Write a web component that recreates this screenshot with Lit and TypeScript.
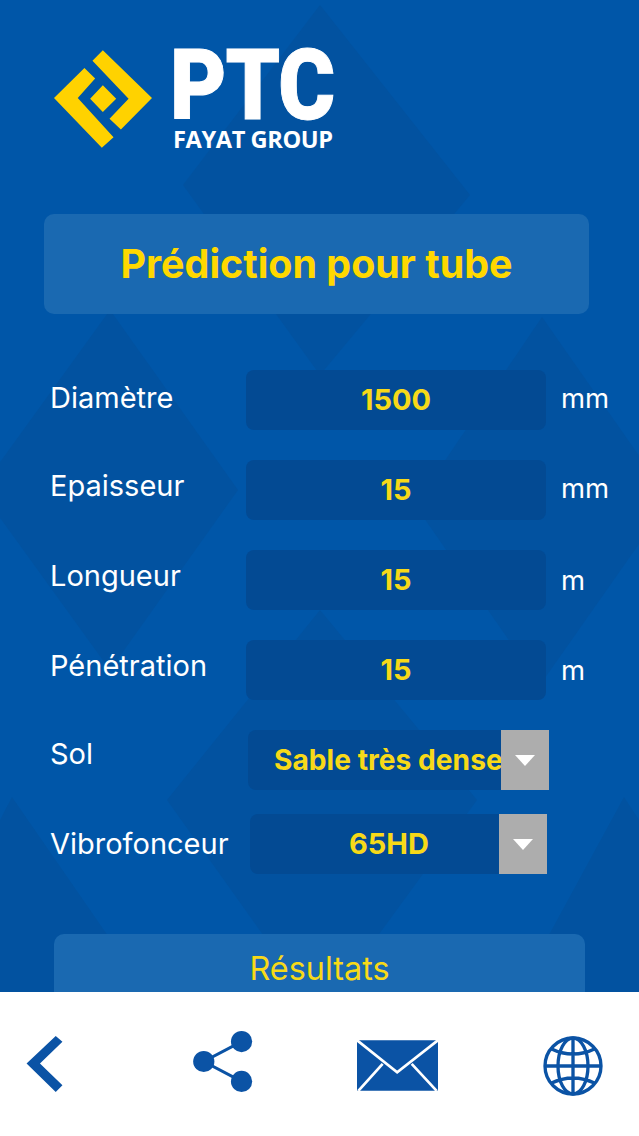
import { LitElement, html, css, svg } from "lit";
import { customElement } from "lit/decorators.js";

interface Row { cls: string; label: string; value: string; unit?: string; select?: boolean }
const rows: Row[] = [
  { cls: "r1", label: "Diamètre", value: "1500", unit: "mm" },
  { cls: "r2", label: "Epaisseur", value: "15", unit: "mm" },
  { cls: "r3", label: "Longueur", value: "15", unit: "m" },
  { cls: "r4", label: "Pénétration", value: "15", unit: "m" },
  { cls: "r5", label: "Sol", value: "Sable très dense", select: true },
  { cls: "r6", label: "Vibrofonceur", value: "65HD", select: true },
];

const darkShapes = [
  "320,5 470,195 320,375 183,185",
  "110,310 238,490 110,670 -20,490",
  "542,317 670,500 540,685 415,505",
  "320,610 477,800 320,1015 167,800",
];
const cornerShapes = [
  "0,820 12,797 106,933 145,992 0,992",
  "639,820 624,797 550,933 510,992 639,992",
];

@customElement("app-root")
export class AppRoot extends LitElement {
  static styles = css`
    :host { display: block; width: 639px; height: 1136px; overflow: hidden; font-family: Inter, "Liberation Sans", sans-serif; background: #fff; }
    .page { display: flex; flex-direction: column; height: 1136px; }
    .main { position: relative; height: 992px; flex: none; overflow: hidden; background: #0056a8; box-sizing: border-box; padding: 50px 50px 0 44px; }
    .bg { position: absolute; inset: 0; width: 639px; height: 992px; }
    .shape { fill: #054d93; opacity: .4; }
    .content { position: relative; display: flex; flex-direction: column; }
    .logo { display: flex; align-items: flex-start; margin-left: 10px; height: 100px; gap: 22px; }
    .mark { width: 98px; height: 98px; flex: none; }
    .word { display: flex; flex-direction: column; color: #fff; width: 162px; }
    .ptc { font-family: Roboto, Inter, sans-serif; font-weight: 900; font-size: 98px; line-height: 72px; height: 72px; letter-spacing: -1px; -webkit-text-stroke: 1px #fff; margin-left: -4px; transform: scaleX(.885); transform-origin: left center; white-space: nowrap; }
    .fayat { font-family: "Open Sans", Inter, sans-serif; font-weight: 700; font-size: 23.6px; line-height: 20px; margin-top: 7px; margin-left: -1px; white-space: nowrap; letter-spacing: -0.4px; }
    .title { margin-top: 64px; width: 545px; height: 100px; border-radius: 10px; background: #1a69b1; display: flex; align-items: center; justify-content: center; color: #ffd800; font-weight: 700; font-size: 39.4px; }
    .form { display: flex; flex-direction: column; margin-top: 56px; margin-left: 6px; }
    .row { display: flex; height: 60px; align-items: center; margin-bottom: 30px; }
    .label { width: 196px; flex: none; color: #fff; font-size: 29px; line-height: 34px; }
    .field { width: 300px; height: 60px; flex: none; border-radius: 8px; background: #034a93; color: #f7d918; font-weight: 700; font-size: 29px; line-height: 58px; display: flex; align-items: center; justify-content: center; }
    .unit { color: #fff; font-size: 27.5px; margin-left: 15px; }
    .r1 .label { margin-top: -4px; }
    .r1 .unit, .r2 .unit { margin-top: -4px; }
    .r2 .label, .r3 .label, .r4 .label { margin-top: -8px; }
    .r5 { margin-bottom: 24px; }
    .r5 .label { margin-top: -12px; }
    .r5 .field { margin-left: 2px; width: 301px; }
    .r6 { margin-bottom: 60px; }
    .r6 .field { margin-left: 4px; width: 297px; }
    .arrow { width: 48px; height: 60px; flex: none; background: #adadad; display: flex; align-items: center; justify-content: center; }
    .val { flex: 1; min-width: 0; overflow: hidden; white-space: nowrap; text-align: center; box-sizing: border-box; padding-left: 29px; }
    .r5 .val { text-align: left; padding-left: 26px; font-size: 28.2px; }
    .tri { width: 0; height: 0; border-left: 10px solid transparent; border-right: 10px solid transparent; border-top: 11px solid #fff; }
    .result { margin-left: 10px; width: 531px; height: 100px; border-radius: 10px; background: #1a69b1; color: #f7d918; font-size: 32.4px; display: flex; justify-content: center; padding-top: 15px; box-sizing: border-box; }
    .bar { flex: 1; background: #fff; display: flex; align-items: flex-start; }
    .bar svg { flex: none; display: block; }
    .i1 { width: 37px; height: 56px; margin: 44px 0 0 26px; }
    .i2 { width: 60px; height: 61px; margin: 39px 0 0 130px; }
    .i3 { width: 81px; height: 51px; margin: 48px 0 0 104px; }
    .i4 { width: 60px; height: 60px; margin: 44px 0 0 105px; }
  `;

  private bg() {
    return svg`${[...darkShapes, ...cornerShapes].map((p) => svg`<polygon class="shape" points=${p}></polygon>`)}`;
  }

  render() {
    return html`<div class="page">
      <div class="main">
        <svg class="bg" viewBox="0 0 639 992" aria-hidden="true">${this.bg()}</svg>
        <div class="content">
          <div class="logo">
            <svg class="mark" viewBox="72 60 293 292" aria-hidden="true">
              <path fill="#ffd200" d="M72 203 163 113 195 145 143 203 250 320 215 352Z M218 60 365 203 272 297 238 265 295 205 187 92Z M218 165 258 205 218 245 180 205Z"/>
            </svg>
            <div class="word"><div class="ptc">PTC</div><div class="fayat">FAYAT GROUP</div></div>
          </div>
          <div class="title">Prédiction pour tube</div>
          <div class="form">
            ${rows.map((r) => html`<div class="row ${r.cls}">
              <div class="label">${r.label}</div>
              <div class="field">
                ${r.select ? html`<span class="val">${r.value}</span><span class="arrow"><span class="tri"></span></span>` : r.value}
              </div>
              ${r.unit ? html`<div class="unit">${r.unit}</div>` : ""}
            </div>`)}
          </div>
          <div class="result">Résultats</div>
        </div>
      </div>
      <div class="bar">
        <svg class="i1" viewBox="78 108 107 167" aria-hidden="true"><path fill="#0b53a5" d="M78 190 165 108 185 125 118 190 185 255 165 275Z"/></svg>
        <svg class="i2" viewBox="578 94 180 184" aria-hidden="true">
          <path stroke="#0b53a5" stroke-width="9" fill="none" d="M724 126 610 186 724 246"/>
          <circle cx="610" cy="186" r="32" fill="#0b53a5"/><circle cx="724" cy="126" r="32" fill="#0b53a5"/><circle cx="724" cy="246" r="32" fill="#0b53a5"/>
        </svg>
        <svg class="i3" viewBox="0 0 240 150" aria-hidden="true">
          <rect width="240" height="150" rx="3" fill="#0b53a5"/>
          <path stroke="#fff" stroke-width="8" fill="none" d="M0 0 119 95 240 0 M76 70 4 150 M162 70 236 150"/>
        </svg>
        <svg class="i4" viewBox="0 0 180 180" aria-hidden="true">
          <g fill="none" stroke="#0b53a5" stroke-width="10">
            <circle cx="90" cy="90" r="84"/><ellipse cx="90" cy="90" rx="45" ry="84"/>
            <path d="M90 5V175M5 90H175M24 38Q90 70 156 38M24 142Q90 110 156 142"/>
          </g>
        </svg>
      </div>
    </div>`;
  }
}
